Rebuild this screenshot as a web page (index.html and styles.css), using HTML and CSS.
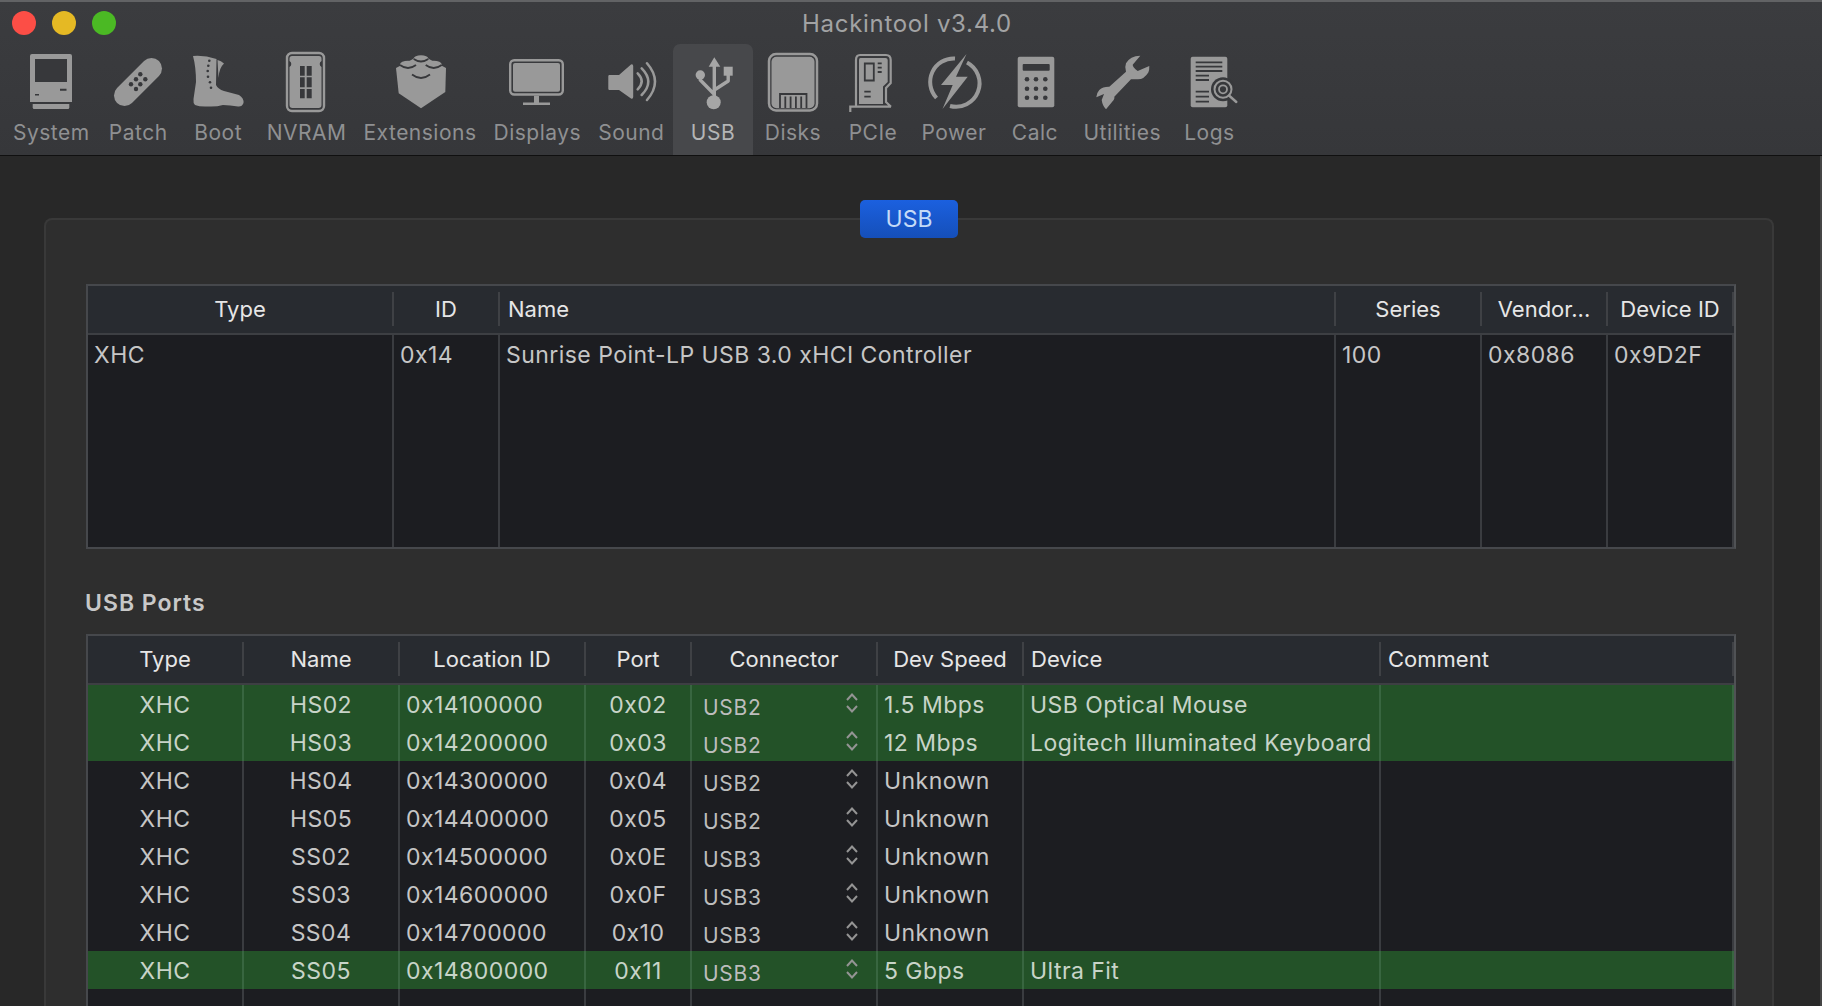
FILE: index.html
```html
<!DOCTYPE html>
<html lang="en">
<head>
  <meta charset="UTF-8">
  <title>Hackintool v3.4.0</title>
  <link rel="stylesheet" href="styles.css">
</head>
<body>

<svg class="defs" width="0" height="0">
  <symbol id="updown" viewBox="0 0 12 20">
    <path d="M1 7 6 1.500l5 5.500M1 13l5 5.500 5-5.500" fill="none" stroke="currentColor" stroke-width="2"/>
  </symbol>
</svg>

<header class="toolbar">
  <div class="titlebar">
    <div class="lights">
      <span class="light red"></span>
      <span class="light yellow"></span>
      <span class="light green"></span>
    </div>
    <div class="title">Hackintool v3.4.0</div>
    <div></div>
  </div>

  <nav class="tools">
    <div class="tool">
      <svg class="icon" viewBox="0 0 64 64">
        <path d="M13 5h38a2 2 0 0 1 2 2v46H11V7a2 2 0 0 1 2-2z"/>
        <path class="cut" d="M16 10h32v23H16zM41 39.7h6.5v2H41zM16 45h4v1.5h-4z"/>
        <path d="M13.7 55h36.6v3.5a1.5 1.5 0 0 1-1.5 1.5H15.2a1.5 1.5 0 0 1-1.5-1.5z"/>
      </svg>
      <span class="label">System</span>
    </div>
    <div class="tool">
      <svg class="icon" viewBox="0 0 64 64">
        <path d="M18.5 46.500 45.500 19.500" fill="none" stroke="currentColor" stroke-width="21" stroke-linecap="round"/>
        <g class="cut">
          <circle cx="25" cy="35.300" r="2.200"/><circle cx="30" cy="30.300" r="2.200"/><circle cx="34.300" cy="25.300" r="2.200"/>
          <circle cx="30" cy="40" r="2.200"/><circle cx="34.300" cy="35.300" r="2.200"/><circle cx="39.300" cy="30.300" r="2.200"/>
        </g>
      </svg>
      <span class="label">Patch</span>
    </div>
    <div class="tool">
      <svg class="icon" viewBox="0 0 64 64">
        <path d="M7 7Q18 6 30.500 10L30 36Q32 40 38 42L53 46Q58 49 57.500 54Q56 58 52 57.500Q44 56 37 56Q30 58 22 57.500Q14 58 9 56Q7 54 7.500 50L10 33Q10 18 7 7z"/>
        <path d="M31.500 11Q35 11.500 38 14.500Q33 19 32.500 29z"/>
        <g class="cut">
          <circle cx="23.300" cy="11.700" r="1.300"/><circle cx="22.300" cy="16.700" r="1.300"/><circle cx="21.700" cy="22" r="1.300"/>
          <circle cx="22" cy="27.700" r="1.300"/><circle cx="24" cy="33.300" r="1.300"/><circle cx="25" cy="38.700" r="1.300"/>
        </g>
      </svg>
      <span class="label">Boot</span>
    </div>
    <div class="tool">
      <svg class="icon" viewBox="0 0 64 64">
        <rect x="12" y="4" width="37" height="58" rx="5" fill="none" stroke="currentColor" stroke-width="2.400"/>
        <path d="M17 7h27a2.500 2.500 0 0 1 2.500 2.500V12q-1.800 1-1.800 3t1.800 3v38a3 3 0 0 1-3 3H17.500a3 3 0 0 1-3-3V18q1.800-1 1.800-3t-1.800-3V9.500A2.500 2.500 0 0 1 17 7z"/>
        <path class="cut" d="M25 17h4.700v9.700H25zM31.700 17h5v9.700h-5zM25 28.300h4.700v10H25zM31.700 28.300h5v10h-5zM25 40h4.700v9.300H25zM31.700 40h5v9.300h-5z"/>
      </svg>
      <span class="label">NVRAM</span>
    </div>
    <div class="tool">
      <svg class="icon" viewBox="0 0 64 64">
        <path d="M8 19 25 10 33 7l8 3 17 9-.7 24L33 59.300 10.700 44.300z"/>
        <ellipse cx="20" cy="15.500" rx="8" ry="3.800"/>
        <ellipse cx="45.700" cy="15.500" rx="8" ry="3.800"/>
        <ellipse cx="33" cy="9.500" rx="7.300" ry="3.300"/>
        <path class="cut-line" d="M12 16q8 6 16 0M37.700 16q8 6 16 0M25.700 10q7.300 5 14.600 0M24 25.500q9 7 18 0"/>
      </svg>
      <span class="label">Extensions</span>
    </div>
    <div class="tool">
      <svg class="icon" viewBox="0 0 64 64">
        <rect x="5.200" y="11.200" width="52.600" height="34.300" rx="4" fill="none" stroke="currentColor" stroke-width="2.400"/>
        <rect x="8" y="14" width="47" height="28.700" rx="2"/>
        <path d="M29 46.700h5v6.800h-5zM18 53.500h27V56H18z"/>
      </svg>
      <span class="label">Displays</span>
    </div>
    <div class="tool">
      <svg class="icon" viewBox="0 0 64 64">
        <path d="M10.500 26H20L32 15.500q2-1 2.200 1.500v31q-.2 2.500-2.200 1.500L20 41h-9.500q-1.200 0-1.200-1.200V27.200q0-1.200 1.200-1.200z"/>
        <path d="M38.700 24.300Q46.700 32.300 38.700 40.300M42.700 19.300Q55.900 32.600 42.700 46M48 14.300Q64 32.600 48 51" fill="none" stroke="currentColor" stroke-width="2.500" stroke-linecap="round"/>
      </svg>
      <span class="label">Sound</span>
    </div>
    <div class="tool active">
      <svg class="icon" viewBox="0 0 64 64">
        <path d="M33.300 8.300 39.300 17.700H27.700z"/>
        <circle cx="32.700" cy="53.300" r="7"/>
        <circle cx="19.300" cy="26" r="4.700"/>
        <path d="M42.700 17.700h9v9h-9z"/>
        <path d="M33.300 16V50M19.300 27V31L33 45M47.200 26V32L33.300 41" fill="none" stroke="currentColor" stroke-width="3.400" stroke-linejoin="round"/>
      </svg>
      <span class="label">USB</span>
    </div>
    <div class="tool">
      <svg class="icon" viewBox="0 0 64 64">
        <rect x="8" y="5" width="48" height="56.500" rx="7" fill="none" stroke="currentColor" stroke-width="2.500"/>
        <rect x="10.500" y="7.700" width="43" height="51.600" rx="5"/>
        <path class="cut-line" d="M19 59V45h26.500v14M24.300 47.500V59M29.600 47.500V59M34.900 47.500V59M40.200 47.500V59"/>
      </svg>
      <span class="label">Disks</span>
    </div>
    <div class="tool">
      <svg class="icon" viewBox="0 0 64 64">
        <path d="M9.300 63V57.700H50M15 57.700V11Q15 6 19 6H45Q49.700 6 49.700 11V34L45 39V53L50 57.700" fill="none" stroke="currentColor" stroke-width="2.200"/>
        <path d="M19.500 9H44.500Q46.700 9 46.700 11V33L42 37.500V55H18V11Q18 9 19.500 9z"/>
        <path class="cut-line" d="M23.800 14.500h9v17h-9zM36.700 14.300h4M36.700 18.600h4M36.700 23h4M23.300 42.700h6.400M23.300 47.700h6.400"/>
      </svg>
      <span class="label">PCIe</span>
    </div>
    <div class="tool">
      <svg class="icon" viewBox="0 0 64 64">
        <path d="M33 9.500A23.500 23.500 0 0 0 14.500 49M45 13.500A23.500 23.500 0 0 1 28 57" fill="none" stroke="currentColor" stroke-width="4"/>
        <path d="M44.500 5 19 36H30.700L20.500 60 45.700 27.700H34z"/>
      </svg>
      <span class="label">Power</span>
    </div>
    <div class="tool">
      <svg class="icon" viewBox="0 0 64 64">
        <rect x="14.700" y="7.700" width="36.600" height="50.600" rx="2"/>
        <rect class="cut" x="19.700" y="15" width="27" height="6.700" rx="1"/>
        <g class="cut">
          <circle cx="24" cy="30.300" r="2.300"/><circle cx="33" cy="30.300" r="2.300"/><circle cx="42.300" cy="30.300" r="2.300"/>
          <circle cx="24" cy="39.700" r="2.300"/><circle cx="33" cy="39.700" r="2.300"/><circle cx="42.300" cy="39.700" r="2.300"/>
          <circle cx="24" cy="48.700" r="2.300"/><circle cx="33" cy="48.700" r="2.300"/><circle cx="42.300" cy="48.700" r="2.300"/>
        </g>
      </svg>
      <span class="label">Calc</span>
    </div>
    <div class="tool">
      <svg class="icon" viewBox="0 0 64 64">
        <path d="M50.300 6.700 42.700 15.700Q42.500 18 47.700 22L59.300 17Q59.500 21 58.300 23.500Q54 30.500 47.700 30.300L41 30.300 24.300 47.700Q25 50 22 53L16 60.300Q12.500 57 11.700 51L14 45 6.300 48.300Q6.500 44 9.300 41Q13 37.500 19.300 37.700L36 22.700Q34.500 18 36 14.300Q40 7 50.300 6.700z"/>
      </svg>
      <span class="label">Utilities</span>
    </div>
    <div class="tool">
      <svg class="icon" viewBox="0 0 64 64">
        <rect x="13.700" y="7.700" width="36.600" height="50.600" rx="2"/>
        <path class="cut-line" d="M18.700 13.300h26.600M18.700 17.700h26.600M18.700 22h26.600M18.700 26.700H32M18.700 31H32M18.700 42.700H32M18.700 47.700H32M18.700 52.700H32"/>
        <circle class="cut" cx="46" cy="40.300" r="12"/>
        <circle cx="46" cy="40.300" r="8.500" fill="none" stroke="currentColor" stroke-width="2"/>
        <circle cx="46" cy="40.300" r="4" fill="none" stroke="currentColor" stroke-width="1.800"/>
        <path d="M52 46.500 59.300 53" fill="none" stroke="currentColor" stroke-width="2.400" stroke-linecap="round"/>
      </svg>
      <span class="label">Logs</span>
    </div>
  </nav>
</header>

<main class="content">
  <section class="panel">
    <button class="tab">USB</button>

    <table class="grid controllers">
      <colgroup>
        <col class="c-type"><col class="c-id"><col><col class="c-series"><col class="c-vendor"><col class="c-device">
      </colgroup>
      <thead>
        <tr>
          <th><span>Type</span></th>
          <th><span>ID</span></th>
          <th><span class="left">Name</span></th>
          <th><span>Series</span></th>
          <th><span>Vendor...</span></th>
          <th><span>Device ID</span></th>
        </tr>
      </thead>
      <tbody>
        <tr>
          <td>XHC</td>
          <td>0x14</td>
          <td>Sunrise Point-LP USB 3.0 xHCI Controller</td>
          <td>100</td>
          <td>0x8086</td>
          <td>0x9D2F</td>
        </tr>
        <tr class="filler"><td></td><td></td><td></td><td></td><td></td><td></td></tr>
      </tbody>
    </table>

    <h2 class="section-title">USB Ports</h2>

    <table class="grid ports">
      <colgroup>
        <col class="p-type"><col class="p-name"><col class="p-loc"><col class="p-port"><col class="p-conn"><col class="p-speed"><col class="p-device"><col>
      </colgroup>
      <thead>
        <tr>
          <th><span>Type</span></th>
          <th><span>Name</span></th>
          <th><span>Location ID</span></th>
          <th><span>Port</span></th>
          <th><span>Connector</span></th>
          <th><span>Dev Speed</span></th>
          <th><span class="left">Device</span></th>
          <th><span class="left">Comment</span></th>
        </tr>
      </thead>
      <tbody>
        <tr class="on">
          <td class="mid">XHC</td><td class="mid">HS02</td><td>0x14100000</td><td class="mid">0x02</td>
          <td><div class="popup"><span>USB2</span><svg class="updown"><use href="#updown"/></svg></div></td>
          <td>1.5 Mbps</td><td>USB Optical Mouse</td><td></td>
        </tr>
        <tr class="on">
          <td class="mid">XHC</td><td class="mid">HS03</td><td>0x14200000</td><td class="mid">0x03</td>
          <td><div class="popup"><span>USB2</span><svg class="updown"><use href="#updown"/></svg></div></td>
          <td>12 Mbps</td><td>Logitech Illuminated Keyboard</td><td></td>
        </tr>
        <tr>
          <td class="mid">XHC</td><td class="mid">HS04</td><td>0x14300000</td><td class="mid">0x04</td>
          <td><div class="popup"><span>USB2</span><svg class="updown"><use href="#updown"/></svg></div></td>
          <td>Unknown</td><td></td><td></td>
        </tr>
        <tr>
          <td class="mid">XHC</td><td class="mid">HS05</td><td>0x14400000</td><td class="mid">0x05</td>
          <td><div class="popup"><span>USB2</span><svg class="updown"><use href="#updown"/></svg></div></td>
          <td>Unknown</td><td></td><td></td>
        </tr>
        <tr>
          <td class="mid">XHC</td><td class="mid">SS02</td><td>0x14500000</td><td class="mid">0x0E</td>
          <td><div class="popup"><span>USB3</span><svg class="updown"><use href="#updown"/></svg></div></td>
          <td>Unknown</td><td></td><td></td>
        </tr>
        <tr>
          <td class="mid">XHC</td><td class="mid">SS03</td><td>0x14600000</td><td class="mid">0x0F</td>
          <td><div class="popup"><span>USB3</span><svg class="updown"><use href="#updown"/></svg></div></td>
          <td>Unknown</td><td></td><td></td>
        </tr>
        <tr>
          <td class="mid">XHC</td><td class="mid">SS04</td><td>0x14700000</td><td class="mid">0x10</td>
          <td><div class="popup"><span>USB3</span><svg class="updown"><use href="#updown"/></svg></div></td>
          <td>Unknown</td><td></td><td></td>
        </tr>
        <tr class="on">
          <td class="mid">XHC</td><td class="mid">SS05</td><td>0x14800000</td><td class="mid">0x11</td>
          <td><div class="popup"><span>USB3</span><svg class="updown"><use href="#updown"/></svg></div></td>
          <td>5 Gbps</td><td>Ultra Fit</td><td></td>
        </tr>
        <tr class="filler"><td></td><td></td><td></td><td></td><td></td><td></td><td></td><td></td></tr>
      </tbody>
    </table>
  </section>
</main>

</body>
</html>
```

FILE: styles.css
```css
* {
  box-sizing: border-box;
}

html, body {
  height: 100%;
  margin: 0;
  overflow: hidden;
}

body {
  font-family: Inter, "Noto Sans", sans-serif;
  font-size: 23px;
  letter-spacing: 0.45px;
  background-color: #282828;
  color: #c6c6c6;
}

.defs {
  display: block;
  height: 0;
}

/* barra de cima */
.toolbar {
  height: 156px;
  background: linear-gradient(#3b3c3f, #36373a);
  border-top: 2px solid #626365;
  border-bottom: 1px solid #101010;
}

.titlebar {
  display: grid;
  grid-template-columns: 1fr auto 1fr;
  align-items: center;
  height: 42px;
  padding: 0 20px 0 12px;
}

.lights {
  display: flex;
  gap: 16px;
}

.light {
  width: 24px;
  height: 24px;
  border-radius: 50%;
}

.red { background-color: #fc4e46; }
.yellow { background-color: #e5b924; }
.green { background-color: #4bb924; }

.title {
  font-size: 24px;
  letter-spacing: 0.7px;
  color: #a2a3a4;
}

.tools {
  display: flex;
  padding-left: 4.5px;
  height: 111px;
}

.tool {
  display: flex;
  flex-direction: column;
  align-items: center;
  min-width: 80px;
  padding-top: 5px;
  color: #999;
  border-radius: 7px 7px 0 0;
}

.tool.active {
  background-color: #47484b;
  color: #a6a6a6;
}

.icon {
  width: 64px;
  height: 64px;
  flex: none;
  fill: currentColor;
}

.cut { fill: #37383b; }

.cut-line {
  fill: none;
  stroke: #37383b;
  stroke-width: 1.800;
}

.label {
  margin-top: 7px;
  padding: 0 8.5px;
  font-size: 21px;
  line-height: 26px;
  letter-spacing: 0.5px;
  color: #8f9092;
  white-space: nowrap;
}

.tool.active .label {
  color: #b4b5b6;
}

/* conteudo */
.content {
  height: calc(100% - 156px);
  padding: 62px 46px 0 44px;
  border-right: 2px solid #454545;
}

.panel {
  display: flex;
  flex-direction: column;
  padding: 0 36px 0 40px;
  background-color: #2e2e2e;
  border: 2px solid #393939;
  border-bottom: 0;
  border-radius: 8px 8px 0 0;
}

.tab {
  align-self: center;
  width: 98px;
  height: 38px;
  margin-top: -20px;
  margin-right: 4px;
  margin-bottom: 46px;
  padding: 0;
  font-family: inherit;
  font-size: 23px;
  color: #c4daf7;
  background: linear-gradient(#1b60df, #154fb9);
  border: 0;
  border-radius: 5px;
}

.section-title {
  margin: 39px 0 16px -1px;
  font-size: 23px;
  line-height: 30px;
  font-weight: 600;
  letter-spacing: 1px;
  color: #c8c8c8;
}

.grid {
  width: 100%;
  table-layout: fixed;
  border-collapse: separate;
  border-spacing: 0;
  background-color: #1c1d21;
  border: 2px solid #46484c;
  border-right-color: #505255;
}

.grid th {
  padding: 6px 0 7px;
  font-size: 22px;
  letter-spacing: 0;
  font-weight: 400;
  background-color: #282b30;
  border-bottom: 2px solid #3d3f43;
  color: #e6e6e6;
}

.grid th span {
  display: block;
  height: 34px;
  line-height: 34px;
  text-align: center;
  border-right: 2px solid #3f4145;
}

.grid th span.left {
  text-align: left;
  padding-left: 8px;
}

.ports th span.left {
  padding-left: 7px;
}

.grid td {
  height: 38px;
  padding: 2px 4px 0 6px;
  border-right: 2px solid #3a3c40;
  white-space: nowrap;
  overflow: hidden;
}

.grid td.mid {
  text-align: center;
  padding: 2px 0 0;
}

.grid tr.on td {
  background-color: #235228;
  border-right-color: #386640;
  color: #c8d4c8;
}

.controllers .filler td { height: 174px; }
.ports .filler td { height: 60px; }

.c-type { width: 306px; }
.c-id { width: 106px; }
.c-series { width: 146px; }
.c-vendor { width: 126px; }
.c-device { width: 126px; }

.p-type { width: 156px; }
.p-name { width: 156px; }
.p-loc { width: 186px; }
.p-port { width: 106px; }
.p-conn { width: 186px; }
.p-speed { width: 146px; }
.p-device { width: 357px; }

.popup {
  display: flex;
  align-items: center;
  justify-content: space-between;
  padding: 0 14px 0 5px;
  margin-top: -2px;
  font-size: 21px;
  letter-spacing: 0.7px;
  color: #bdbdbd;
}

.popup span {
  padding-top: 6px;
}

.updown {
  width: 12px;
  height: 20px;
  margin-bottom: 2px;
  color: #949494;
}
```
